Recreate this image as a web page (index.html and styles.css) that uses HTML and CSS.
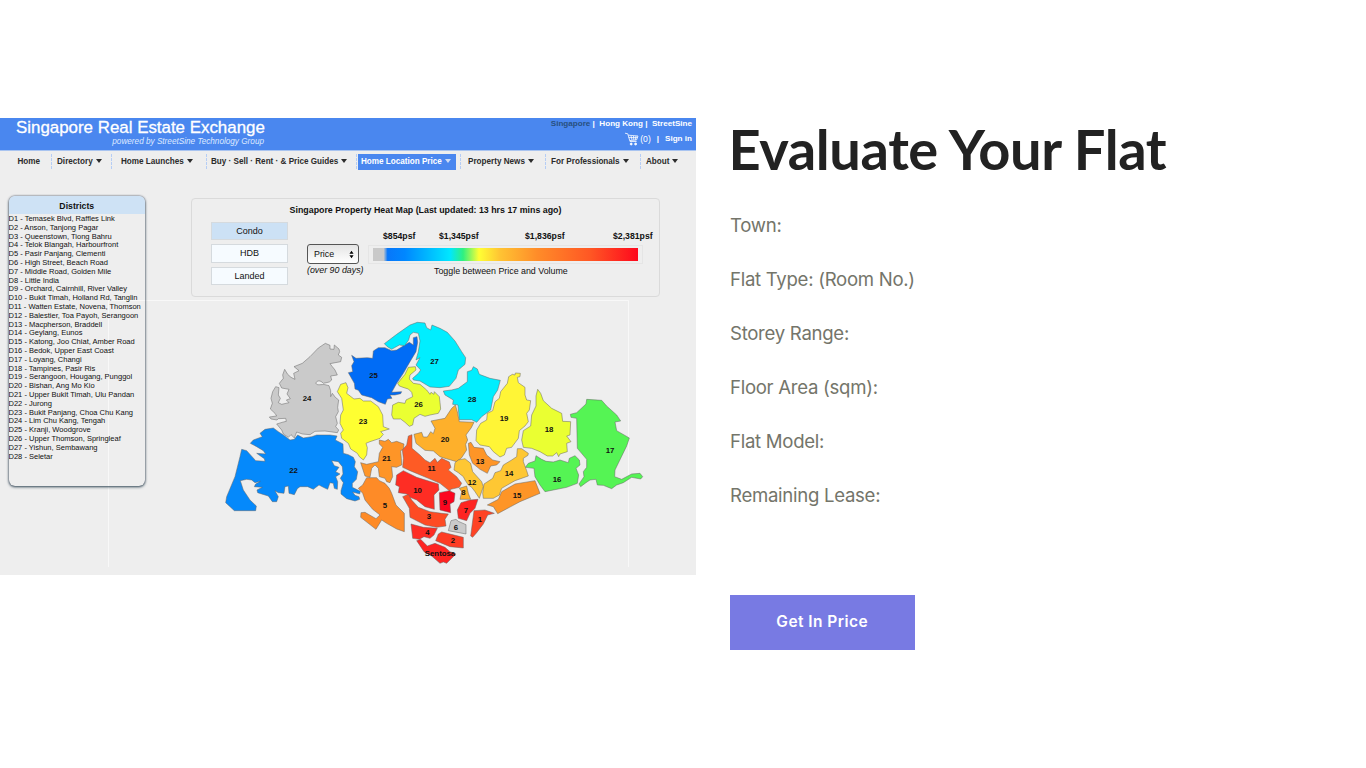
FILE: index.html
```html
<!DOCTYPE html>
<html lang="en">
<head>
<meta charset="utf-8">
<title>Evaluate Your Flat</title>
<link rel="stylesheet" href="styles.css">
</head>
<body>
<main class="page">
<section class="exchange">
  <header class="banner">
    <div class="brand"><div class="brand-name">Singapore Real Estate Exchange</div><div class="brand-sub">powered by StreetSine Technology Group</div></div>
    <div class="account">
      <div class="regions"><span class="current">Singapore</span> |&nbsp; Hong Kong |&nbsp; StreetSine</div>
      <div class="signin"><svg class="cart" viewBox="0 0 14 14"><path d="M0 1.2L2.8 1.8L5 9.5H11.6M3.500 3.2L13 4L11.500 8L5 8.500M6 3.800L7 8M8.500 4L8.800 8M11 4L10.300 8M3.700 5.600H12.500"/><circle cx="6.2" cy="12" r="1"/><circle cx="10.6" cy="12" r="1"/></svg><span class="count">(0)</span><span class="bar">|</span><span>Sign in</span></div>
    </div>
  </header>
  <nav class="menu">
    <a class="first">Home</a><a>Directory<i></i></a><a class="launches">Home Launches<i></i></a><a class="buy">Buy · Sell · Rent · &amp; Price Guides<i></i></a><a class="on"><b>Home Location Price<i></i></b></a><a class="news">Property News<i></i></a><a>For Professionals<i></i></a><a>About<i></i></a>
  </nav>
  <div class="content">
    <aside class="districts">
      <h2>Districts</h2>
      <ul>
        <li>D1 - Temasek Blvd, Raffles Link</li><li>D2 - Anson, Tanjong Pagar</li><li>D3 - Queenstown, Tiong Bahru</li><li>D4 - Telok Blangah, Harbourfront</li><li>D5 - Pasir Panjang, Clementi</li><li>D6 - High Street, Beach Road</li><li>D7 - Middle Road, Golden Mile</li><li>D8 - Little India</li><li>D9 - Orchard, Cairnhill, River Valley</li><li>D10 - Bukit Timah, Holland Rd, Tanglin</li><li>D11 - Watten Estate, Novena, Thomson</li><li>D12 - Balestier, Toa Payoh, Serangoon</li><li>D13 - Macpherson, Braddell</li><li>D14 - Geylang, Eunos</li><li>D15 - Katong, Joo Chiat, Amber Road</li><li>D16 - Bedok, Upper East Coast</li><li>D17 - Loyang, Changi</li><li>D18 - Tampines, Pasir Ris</li><li>D19 - Serangoon, Hougang, Punggol</li><li>D20 - Bishan, Ang Mo Kio</li><li>D21 - Upper Bukit Timah, Ulu Pandan</li><li>D22 - Jurong</li><li>D23 - Bukit Panjang, Choa Chu Kang</li><li>D24 - Lim Chu Kang, Tengah</li><li>D25 - Kranji, Woodgrove</li><li>D26 - Upper Thomson, Springleaf</li><li>D27 - Yishun, Sembawang</li><li>D28 - Seletar</li>
      </ul>
    </aside>
    <div class="heat">
      <h3>Singapore Property Heat Map (Last updated: 13 hrs 17 mins ago)</h3>
      <div class="controls">
        <div class="types"><span class="chosen">Condo</span><span>HDB</span><span>Landed</span></div>
        <div class="measure"><div class="select">Price<svg viewBox="0 0 6 10"><path d="M3 .5L5.5 4H.5ZM3 9.5L5.5 6H.5Z"/></svg></div><em>(over 90 days)</em></div>
        <div class="scale"><div class="prices"><span>$854psf</span><span>$1,345psf</span><span>$1,836psf</span><span>$2,381psf</span></div><div class="track"><div class="gradient"></div></div><p>Toggle between Price and Volume</p></div>
      </div>
    </div>
  </div>
  <svg class="map" viewBox="0 300 696 274">
    <path class="frame" d="M108.500 567V300.500H628.500V567"/>
    <g transform="translate(215 320) scale(.33333)">
      <path fill="#cacaca" d="M331,70L345,76L345,87L357,88L358,75L372,87L374,95L370,105L380,112L377,125L345,131L352,140L360,150L367,165L347,168L350,180L343,186L325,190C315,178 303,183 303,190C306,198 320,192 330,194L342,197L347,212V230L352,220L361,232L371,240L368,262L370,275L362,290L367,310L362,320L371,330L367,338L330,333L300,334L285,344L262,342L245,336L238,354L228,344L220,352L205,342L200,330L185,312L205,306L214,304L212,295L190,296L186,300L168,297L163,291L185,288L180,280L166,267L172,250L168,235L173,215L182,200L192,203L190,225L196,235L190,248L200,253L222,248L214,240L226,236L216,222L222,208L200,204L193,190L205,175L203,165L209,148L218,163L228,172L240,178L236,160L252,152L237,140L262,130L285,110L310,84Z"/>
      <path fill="#0589fb" d="M175,324L190,335L205,345L225,360L238,358L248,345L265,354L290,350L305,345L345,345L366,348L361,360L384,372L385,400L400,404L415,412L421,425L418,440L428,455L424,478L412,490V502L436,514L434,522L413,516L420,526L432,530L434,538L420,543L395,536L378,522V512L385,488L376,475L384,462L382,440L370,425L350,422L358,437L372,442L362,455L375,462L362,470L368,485L367,508L358,505L355,490L345,488L338,508L325,502L312,495L295,508L278,500L255,500L247,506L238,524L222,520L220,498L210,500L207,520L190,518L180,512L190,530L185,545H172L160,528L140,522L128,518L126,510L142,502L118,500L122,492L136,484L120,488L110,480L95,478L76,482L85,510L105,540L124,558L122,572H58L32,548L35,530L60,470L75,410L80,388L95,392L122,422L150,424L148,416L125,400L152,402L145,392L125,380L106,370L115,360L142,350L135,340L150,328Z"/>
    </g>
    <g transform="translate(330 315) scale(.33333)">
      <path fill="#006cf6" d="M65,121L78,130L112,128L128,130L130,108L145,98H165L185,107L200,105L238,82L250,90V68L261,65L263,82L258,110L240,140L220,175L200,205L185,232L215,230L212,236L195,240H180L186,250L172,252L166,268L145,260L125,248L95,240L85,226L75,222L73,205L55,173L68,170L65,152L72,140Z"/>
      <path fill="#00eeff" d="M163,86L200,58L240,30L262,22L285,24L290,38L302,45L306,30L330,40L352,52L375,78L395,110L407,128L405,148L385,165L378,190L358,214L330,218L300,216L270,198L250,195L248,190L265,175L272,165L258,150L270,128L258,135L265,110L270,78L265,55L250,52L240,60L236,75L224,92L208,90L185,103L172,95Z"/>
      <path fill="#eaff32" d="M235,157L256,155L258,165L240,180L238,192L250,205L270,208L290,225L300,238L303,232L312,238L313,230L328,245L330,262L332,282L325,295L300,300L285,304L270,298L252,310L248,330L238,334L225,322L212,312H190L185,300L188,270L205,262L225,265L228,255L248,245L245,232L235,222L222,218L208,213L203,205L225,178Z"/>
      <path fill="#00eeff" d="M430,155L442,162L448,178L480,190L511,196L503,225L490,245L482,285L455,305L440,322L425,314H388L384,270L368,268L370,255L345,240L340,228L365,225L385,220L412,200V170L425,166Z"/>
      <path fill="#feff31" d="M48,203L54,218L50,235L72,252L90,250L100,258L122,258L145,275L158,300L160,335L178,342L152,350L160,358L150,370L120,380L108,385L112,398L110,420L100,435L88,425L82,415L62,402L55,385L35,370L32,355L40,345L30,325L32,300L40,285L35,250L22,230L32,208Z"/>
      <path fill="#feb02b" d="M376,270L382,290L388,320L432,322L424,338L408,360L413,375L407,388L410,405L395,428L380,440L345,430L330,425L310,408L285,406L258,385L252,358L275,352L280,366H292L302,350L310,356L315,340L303,318L345,310L365,280Z"/>
    </g>
    <g transform="translate(460 360) scale(.33333)">
      <path fill="#fff536" d="M165,45L166,39L181,40L180,50L172,52L175,68L195,82V105L200,120L212,122L208,150L200,160L205,185L195,198L178,212L175,235L155,262L140,265L133,285L120,291L100,275L88,260L60,255L48,242L50,210L62,190L80,180L82,160L98,152L105,125L118,115L122,95L142,70L146,50L157,43Z"/>
      <path fill="#eaff32" d="M233,88L242,100L250,122L275,145L305,160L308,184L332,185L330,225L320,228L333,245L320,250L322,275L300,282L296,290L290,278L278,288H262L240,275L215,265L190,262L185,240L190,212L212,198L215,165L228,138V108Z"/>
      <path fill="#55f454" d="M380,118L425,121L440,138L470,165L482,183L465,186L470,212L508,234L500,258L465,330L464,350L485,358L515,342L540,340L548,350L542,357L515,352L490,368L470,375L455,386L430,376L412,375L408,358L390,360L378,368L362,380L357,372L372,350L370,335L380,322V298L352,265L350,175L333,172L331,163L350,158L378,132Z"/>
      <path fill="#55f454" d="M228,287L245,298L258,304L280,306L300,300L325,308L328,295L345,287L358,300L360,315L348,325L356,345L352,370L320,382L255,395L240,375L225,350L222,325L196,322L205,310L225,303Z"/>
      <path fill="#fe9527" d="M25,250L33,247L42,262L70,265L80,285L98,300L120,305L110,315L92,318L82,340L60,328L38,310L28,285Z"/>
      <path fill="#fec733" d="M172,266H185L205,280L204,286L190,295V305L200,332L205,348L165,362L125,385L118,405L100,415L70,415L68,400L72,372L98,355L105,338L122,332L130,315L155,300L170,290Z"/>
      <path fill="#fe9527" d="M225,362L240,400L180,425L113,461L100,440L82,435L115,418L125,395L165,372Z"/>
    </g>
    <g transform="translate(350 430) scale(.33333)">
      <path fill="#fe9527" d="M88,30L105,34L115,28L125,38L140,34L162,42L160,58L152,62L154,85L155,105L140,112L125,110L128,140L120,158L110,155L105,145L88,140L85,115L75,105L65,115L60,142L45,138L32,98L50,103L85,95L88,70L98,52L88,42Z"/>
      <path fill="#fe8b27" d="M50,143H80L88,152L105,160L118,175L125,190L138,225L163,250V305L140,297L110,280L95,270L78,298L32,262L33,248L45,247L78,266L90,255L68,238L45,210L38,190L25,175L38,165Z"/>
      <path fill="#fe5b25" d="M175,18L186,14V55L210,75L225,90L240,98L255,85L262,97L275,85L298,96L303,112L295,120L320,140L335,160L328,172L302,178L300,184L270,160L235,145L180,122L158,112L160,85L157,60L170,45Z"/>
      <path fill="#fe2d24" d="M160,122L200,142L265,162L267,180L252,195L253,238L225,230L200,210L180,202L170,192L145,188L148,170L137,165L140,135Z"/>
      <path fill="#fc061f" d="M268,188L298,182L315,190L312,215L300,222L302,248L270,240Z"/>
      <path fill="#fe4b24" d="M158,200L175,193L185,210L205,232L240,245L275,250L295,252L285,268L288,288L260,292L225,285L180,262L178,235Z"/>
      <path fill="#fe2d24" d="M183,282L220,292L262,295L252,315L240,325L222,320L208,328L188,325Z"/>
      <path fill="#fe3c24" d="M265,312L275,306L340,322V354L300,350L257,332Z"/>
      <path fill="#fe2422" d="M200,332L212,328L232,348L255,340L285,352L300,365L318,372L290,400L280,396L270,400L245,378L222,365Z"/>
      <path fill="#cacaca" d="M303,272L318,268L325,274L348,284V312L295,302Z"/>
      <path fill="#fe2422" d="M333,218L360,210L384,208L375,235L360,250L350,272L325,265L322,240Z"/>
      <path fill="#fe4324" d="M372,242L405,240L433,250L413,255L400,282L380,308L368,322L362,318Z"/>
      <path fill="#feb02b" d="M335,185L328,175L350,168L355,190L362,208H330Z"/>
      <path fill="#fec733" d="M325,90L345,86L362,100L368,125L395,155L400,170L388,205L375,185L365,172L355,165L345,150L340,140L325,128L312,120L315,98Z"/>
    </g>
    <g class="numbers">
      <text x="307" y="401">24</text><text x="293.500" y="472.500">22</text><text x="373.500" y="378">25</text><text x="434.500" y="364">27</text><text x="418.500" y="407">26</text><text x="472" y="401.500">28</text><text x="363" y="424">23</text><text x="445" y="441.500">20</text><text x="504" y="420.500">19</text><text x="549" y="431.500">18</text><text x="610" y="452.500">17</text><text x="557" y="481.500">16</text><text x="480" y="463.500">13</text><text x="509" y="476">14</text><text x="517" y="498">15</text><text x="386.500" y="460.500">21</text><text x="385" y="508">5</text><text x="431.500" y="471">11</text><text x="417.500" y="492.500">10</text><text x="445" y="505">9</text><text x="429" y="519">3</text><text x="427.500" y="535">4</text><text x="453" y="542.500">2</text><text x="456" y="529.500">6</text><text x="466" y="513">7</text><text x="480" y="521.500">1</text><text x="463.500" y="495">8</text><text x="472" y="484.500">12</text><text x="440" y="556">Sentosa</text>
    </g>
  </svg>
</section>
<section class="evaluate">
  <h1>Evaluate Your Flat</h1>
  <div class="fields"><p>Town:</p><p>Flat Type: (Room No.)</p><p>Storey Range:</p><p>Floor Area (sqm):</p><p>Flat Model:</p><p>Remaining Lease:</p></div>
  <button class="cta">Get In Price</button>
</section>
</main>
</body>
</html>
```

FILE: styles.css
```css
* { box-sizing: border-box; }
body { margin: 0; background: #fff; }
h1, h2, h3, p, ul { margin: 0; padding: 0; }
.page { display: flex; height: 768px; padding-top: 118px; overflow: hidden; }
.exchange { position: relative; width: 696px; height: 456.500px; background: #eee; font-family: "Liberation Sans", Arial, sans-serif; color: #111; overflow: hidden; }
.banner { display: flex; justify-content: space-between; height: 33px; background: #4a87ef; border-bottom: 1px solid #a9c4f0; color: #fff; }
.brand { width: 266px; padding-left: 16px; white-space: nowrap; }
.brand-name { font-size: 16.9px; line-height: 19px; -webkit-text-stroke: .3px #fff; }
.brand-sub { font-size: 8.2px; font-style: italic; line-height: 9px; text-align: right; color: #dde9ff; padding-right: 2px; }
.account { padding-right: 4px; font-size: 8.100px; font-weight: bold; text-align: right; }
.regions { height: 12px; line-height: 11px; }
.current { color: #285080; }
.signin { display: flex; justify-content: flex-end; align-items: center; height: 17px; }
.cart { width: 14px; height: 14px; fill: #fff; stroke: #fff; stroke-width: .8; }
.cart path { fill: none; }
.count { font-size: 8.600px; font-weight: normal; margin: 0 6px 0 1px; }
.bar { margin-right: 6px; }
.menu { display: grid; grid-template-columns: 51px 60px 95px 150px 104px 85px 95px 56px; height: 23px; padding-top: 3px; font-size: 8.150px; font-weight: bold; color: #2b2b2b; }
.menu a { height: 15px; line-height: 16px; padding-left: 5px; border-left: 1px dashed #b5cdf5; white-space: nowrap; }
.menu .first { border: 0; padding-left: 17.500px; }
.menu .launches { padding-left: 9px; }
.menu .buy { padding-left: 4px; }
.menu .news { padding-left: 7px; }
.menu .on { padding-left: 1px; }
.on b { display: block; width: 98px; height: 16px; padding-left: 3px; background: #4a87ef; color: #fff; }
.on i { color: #cfdcf4; }
.menu i { display: inline-block; margin-left: 3px; border: 3.500px solid transparent; border-top: 4px solid currentColor; border-bottom: 0; vertical-align: 1px; }
.content { display: flex; align-items: flex-start; padding: 22px 0 0 8.500px; }
.districts { position: relative; z-index: 1; width: 136.500px; height: 290px; border-radius: 6px; box-shadow: 0 1px 3px #3c525f, 0 0 2px #667; overflow: hidden; }
.districts h2 { height: 18px; background: #cee2f5; text-align: center; font-size: 8.7px; line-height: 20px; }
.districts ul { list-style: none; padding-top: 1px; font-size: 7.520px; line-height: 8.8px; white-space: nowrap; }
.heat { width: 469px; height: 99px; margin: 2px 0 0 46px; border: 1px solid #dadada; border-radius: 4px; }
.heat h3 { padding-top: 5px; text-align: center; font-size: 8.830px; line-height: 12px; }
.controls { display: flex; padding-left: 19px; }
.types { display: grid; width: 77px; gap: 4px; padding-top: 6px; }
.types span { height: 18.300px; border: 1px solid #d5dade; background: #f6fbff; font-size: 9px; line-height: 17px; text-align: center; }
.types .chosen { background: #cce1f5; }
.measure { width: 53px; margin: 28px 0 0 19px; white-space: nowrap; font-size: 8.850px; }
.measure em { line-height: 13px; }
.select { display: flex; align-items: center; justify-content: space-between; height: 20px; width: 52px; padding: 0 4px 0 6px; border: 1px solid #555; border-radius: 3px; background: linear-gradient(#e4e4e4, #fff); }
.select svg { width: 5px; height: 9px; }
.scale { width: 288px; margin: 13px 0 0 8px; white-space: nowrap; }
.prices { display: grid; grid-template-columns: 56px 86px 88px 58px; height: 16px; padding-left: 15px; font-size: 8.700px; font-weight: bold; line-height: 14px; }
.track { width: 275px; height: 19px; padding: 2px 4px; border: 1px solid #e5e5e5; }
.gradient { height: 13px; background: linear-gradient(90deg, #c9c9c9 0 4%, #0877fa 5.500%, #0087ff 12%, #00e7ff 29%, #30f080 34%, #ffff34 40%, #ffc333 48%, #ff8c29 62%, #ff5724 82%, #fe081d); }
.scale p { padding-left: 66px; font-size: 8.850px; line-height: 14px; }
.map { position: absolute; left: 0; top: 182px; width: 696px; height: 274px; pointer-events: none; }
.map g path { stroke: #646464; stroke-width: 1.500; stroke-linejoin: round; }
.map .frame { fill: none; stroke: #f8f8f8; }
.numbers { font-size: 7.800px; font-weight: bold; text-anchor: middle; fill: #111; }
.evaluate { padding-left: 34px; }
h1 { margin-left: -1.500px; font: bold 56px/62px Lato, sans-serif; letter-spacing: -.4px; color: #222; }
.fields { padding-top: 30px; font: 18.600px/30px Inter, sans-serif; letter-spacing: -.29px; color: #74756a; }
.fields p { margin-bottom: 24px; }
.cta { display: block; width: 184.500px; height: 55.500px; margin-top: 84.500px; padding: 0; border: 0; background: #787ae3; color: #fff; font: 600 15.500px/20px Inter, sans-serif; letter-spacing: .45px; }
```
